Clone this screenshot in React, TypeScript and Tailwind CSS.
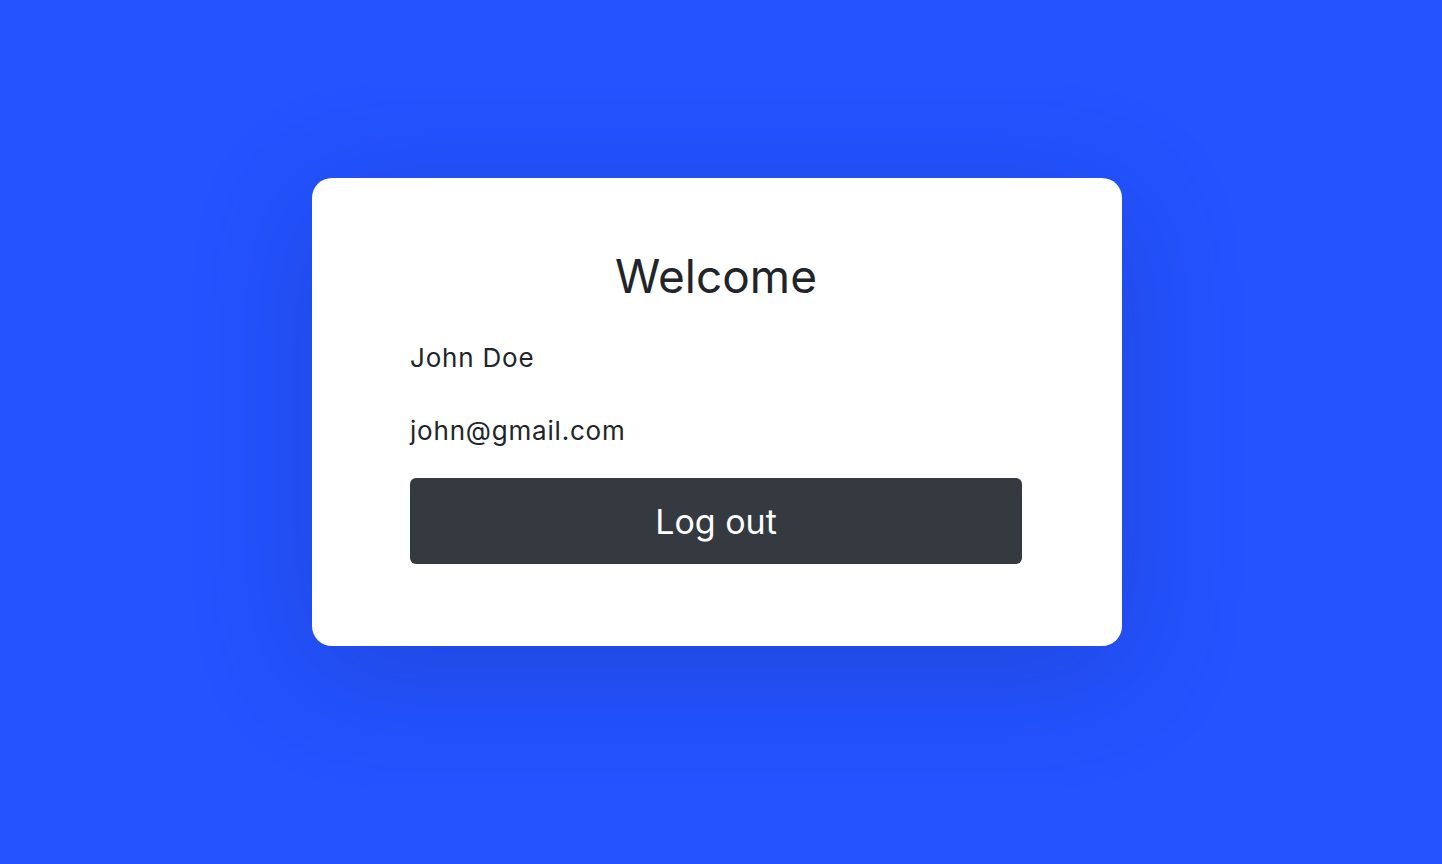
function App() {
  const handleLogout = (e: React.FormEvent<HTMLFormElement>) => {
    e.preventDefault();
  };

  return (
    <div
      className="flex min-h-screen w-full justify-center bg-[#2453ff] pt-[178px] pr-[8px]"
      style={{ fontFamily: "Inter, 'Noto Sans', sans-serif" }}
    >
      <div className="flex h-[468px] w-[810px] flex-col items-center rounded-[20px] bg-white pl-[98px] pr-[100px] pt-[69px] shadow-[0_24px_120px_rgba(20,30,90,0.22)]">
        <h1 className="text-[46px] leading-[58px] text-[#212529]">Welcome</h1>
        <div className="mt-[35px] w-full text-[26px] leading-[36px] tracking-[0.8px] text-[#212529]">
          <p>John Doe</p>
          <p className="mt-[37px]">john@gmail.com</p>
        </div>
        <form onSubmit={handleLogout} className="mt-[29px] w-full">
          <button className="flex h-[86px] w-full items-center justify-center rounded-[6px] bg-[#343a40] text-[34px] text-white">
            Log out
          </button>
        </form>
      </div>
    </div>
  );
}

export default App;
